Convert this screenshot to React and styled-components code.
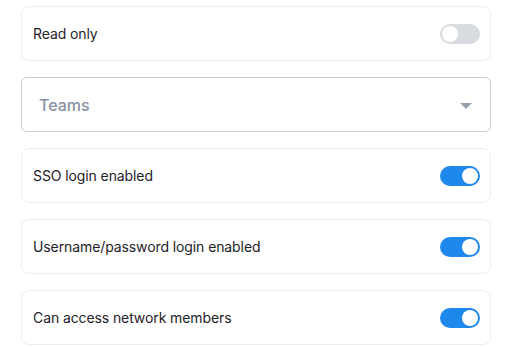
import React, { useState } from "react";
import styled, { createGlobalStyle } from "styled-components";

const GlobalStyle = createGlobalStyle`
  body {
    margin: 0;
    background: #ffffff;
    font-family: Inter, "Noto Sans", sans-serif;
  }
`;

const Page = styled.div`
  width: 470px;
  padding: 6px 0 0 21px;
  display: flex;
  flex-direction: column;
  gap: 16px;
`;

const Card = styled.div`
  box-sizing: border-box;
  height: 55px;
  padding: 0 10px 0 11px;
  display: flex;
  align-items: center;
  justify-content: space-between;
  border: 1px solid #ebedf0;
  border-radius: 8px;
  background: #fff;
`;

const Label = styled.span`
  font-size: 14px;
  color: #1f2229;
  letter-spacing: -0.1px;
`;

const Track = styled.button`
  position: relative;
  width: 40px;
  height: 20px;
  padding: 0;
  border: none;
  border-radius: 10px;
  cursor: pointer;
  background: ${({ $on }) => ($on ? "#1e88ec" : "#d8dbe0")};
`;

const Knob = styled.span`
  position: absolute;
  top: 2px;
  left: ${({ $on }) => ($on ? "22px" : "2px")};
  width: 16px;
  height: 16px;
  border-radius: 50%;
  background: #fff;
`;

const Select = styled.div`
  box-sizing: border-box;
  height: 55px;
  padding: 0 18px 0 17px;
  display: flex;
  align-items: center;
  justify-content: space-between;
  border: 1px solid #c9cdd4;
  border-radius: 6px;
  cursor: pointer;
`;

const Placeholder = styled.span`
  font-size: 16px;
  font-weight: 500;
  color: #8791a2;
`;

const Caret = styled.span`
  width: 0;
  height: 0;
  border-left: 6px solid transparent;
  border-right: 6px solid transparent;
  border-top: 6px solid #98a1ae;
  margin-top: 2px;
`;

const Toggle = ({ on, onClick }) => (
  <Track $on={on} onClick={onClick}>
    <Knob $on={on} />
  </Track>
);

const App = () => {
  const [flags, setFlags] = useState({
    readOnly: false,
    sso: true,
    password: true,
    network: true,
  });

  const flip = (key) => setFlags((f) => ({ ...f, [key]: !f[key] }));

  const row = (key, text) => (
    <Card key={key}>
      <Label>{text}</Label>
      <Toggle on={flags[key]} onClick={() => flip(key)} />
    </Card>
  );

  return (
    <>
      <GlobalStyle />
      <Page>
        {row("readOnly", "Read only")}
        <Select>
          <Placeholder>Teams</Placeholder>
          <Caret />
        </Select>
        {row("sso", "SSO login enabled")}
        {row("password", "Username/password login enabled")}
        {row("network", "Can access network members")}
      </Page>
    </>
  );
};

export default App;
